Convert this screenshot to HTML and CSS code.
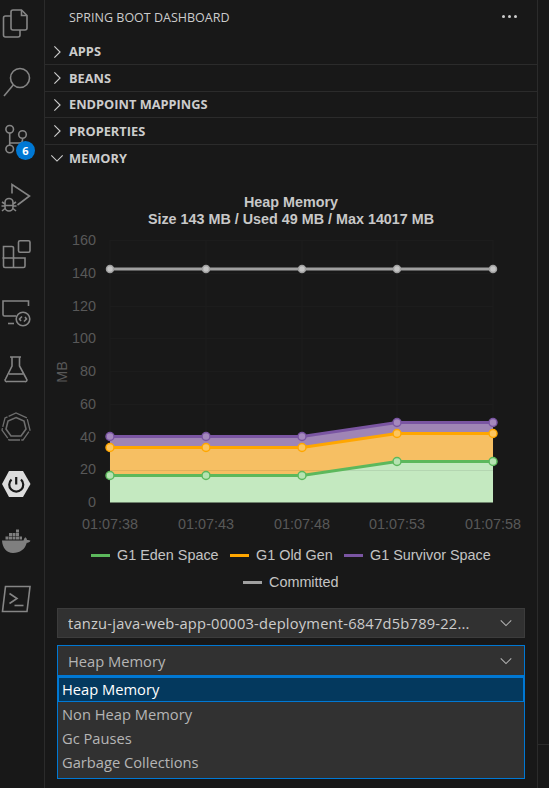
FILE: index.html
```html
<!DOCTYPE html>
<html lang="en">
<head>
    <meta charset="UTF-8">
    <title>Spring Boot Dashboard</title>
    <link rel="stylesheet" href="styles.css">
</head>
<body>
<div class="app">
    <nav class="activity">
        <div class="act-item">
            <svg class="act-icon" viewBox="0 0 30 30"><path d="M12 1H20.500L26 6.500V19a2 2 0 0 1-2 2H12a2 2 0 0 1-2-2V3a2 2 0 0 1 2-2Z"/><path d="M20.500 1V6.500H26"/><path d="M10 7H4.500a2 2 0 0 0-2 2V26a2 2 0 0 0 2 2H17a2 2 0 0 0 2-2V21"/></svg>
        </div>
        <div class="act-item">
            <svg class="act-icon" viewBox="0 0 30 30"><circle cx="19" cy="11" r="9.500"/><path d="M12.200 18L3 29"/></svg>
        </div>
        <div class="act-item">
            <svg class="act-icon" viewBox="0 0 30 30"><circle cx="8.700" cy="5.300" r="3.800"/><circle cx="8.700" cy="25" r="3.800"/><circle cx="21.500" cy="10.500" r="3.800"/><path d="M8.700 9.100V21.200"/><path d="M21.500 14.300V16a3 3 0 0 1-3 3H8.700"/></svg>
            <span class="badge">6</span>
        </div>
        <div class="act-item">
            <svg class="act-icon" viewBox="0 0 30 30"><path d="M11 11.500V2.500L28.500 14L16.500 23"/><path d="M4 20.500a4 4 0 0 1 8 0V25a4 4 0 0 1-8 0Z"/><path d="M4 23.500H12M1 20l3 2M15 20l-3 2M0.500 24H4M15.500 24H12M1 29l3-2.500M15 29l-3-2.500"/></svg>
        </div>
        <div class="act-item">
            <svg class="act-icon" viewBox="0 0 30 30"><rect x="17.500" y="1.800" width="11.500" height="11.500" rx="1.500"/><path d="M2.500 7.500H11a1.500 1.500 0 0 1 1.500 1.500V19H24V27a1.500 1.500 0 0 1-1.500 1.500H4a1.500 1.500 0 0 1-1.500-1.500Z"/><path d="M1.500 19H12.500V28.500"/></svg>
        </div>
        <div class="act-item">
            <svg class="act-icon" viewBox="0 0 30 30"><path d="M15 19H3.500a1.500 1.500 0 0 1-1.500-1.500V4H27.500V9"/><path d="M7 26.500H13"/><circle cx="22" cy="22" r="6.800"/><path d="M21 19.500L18.500 22L20 24M23 24.500L25.500 22L24 20"/></svg>
        </div>
        <div class="act-item">
            <svg class="act-icon" viewBox="0 0 30 30"><path d="M9 3H20M11 3V12L4.500 25a1.500 1.500 0 0 0 1.500 2.500H24a1.500 1.500 0 0 0 1.500-2.500L18.500 12V3"/><path d="M8 20H22"/></svg>
        </div>
        <div class="act-item">
            <svg class="act-icon ring" viewBox="0 0 30 30"><polygon class="ring-thin" points="15,1 26,6 29,18 22,28 8,28 1,18 4,6"/><polygon class="ring-thick" points="15,5.500 23,9 25,17 20,24 10,24 5,17 7,9"/></svg>
        </div>
        <div class="act-item">
            <svg class="act-icon spring" viewBox="0 0 30 30"><polygon class="hex" points="1,15 8,2 22,2 29.500,15 22,28 8,28"/><path class="power" d="M10.500 10.500a7 7 0 1 0 9.500 0"/><path class="power" d="M15.200 8V15.500"/></svg>
        </div>
        <div class="act-item">
            <svg class="act-icon docker" viewBox="0 0 30 30"><path d="M1 13.500H22.500c.4-1.500 1-2.800 2-3.200 1 .8 1.400 1.800 1.500 2.700 1.300-.2 2.500 0 3.500.8-.8 1.500-2.200 2-3.700 2C24 22.500 19 26 12 26 5.500 26 1.500 21 1 13.500Z"/><path d="M4.500 9.500h3v3h-3ZM8 9.500h3v3H8ZM11.500 9.500h3v3h-3ZM15 9.500h3v3h-3ZM8 6h3v3H8ZM11.500 6h3v3h-3ZM15 6h3v3h-3ZM18.500 9.500h2.500v3h-2.500ZM15 2.500h3V5.500h-3Z"/></svg>
        </div>
        <div class="act-item">
            <svg class="act-icon" viewBox="0 0 30 30"><path d="M4.500 2.500H29L26 27.500H1.500Z"/><path d="M8.500 9.500L16 14.500L8.500 19.500"/><path d="M13.500 21.500H22.500"/></svg>
        </div>
    </nav>

    <main class="sidebar">
        <header class="side-title">
            <span>SPRING BOOT DASHBOARD</span>
            <span class="dots"><i></i><i></i><i></i></span>
        </header>
        <div class="section">
            <svg class="chev" viewBox="0 0 16 16"><path d="M5 1.500L11.500 8L5 14.500"/></svg><span class="section-name">APPS</span>
        </div>
        <div class="section">
            <svg class="chev" viewBox="0 0 16 16"><path d="M5 1.500L11.500 8L5 14.500"/></svg><span class="section-name">BEANS</span>
        </div>
        <div class="section">
            <svg class="chev" viewBox="0 0 16 16"><path d="M5 1.500L11.500 8L5 14.500"/></svg><span class="section-name">ENDPOINT MAPPINGS</span>
        </div>
        <div class="section">
            <svg class="chev" viewBox="0 0 16 16"><path d="M5 1.500L11.500 8L5 14.500"/></svg><span class="section-name">PROPERTIES</span>
        </div>
        <div class="section open">
            <svg class="chev" viewBox="0 0 16 16"><path d="M1.500 5L8 11.500L14.500 5"/></svg><span class="section-name">MEMORY</span>
        </div>

        <svg class="chart" viewBox="45 170 492 430">
            <text class="chart-title" x="291" y="207">Heap Memory</text>
            <text class="chart-title" x="291" y="224">Size 143 MB / Used 49 MB / Max 14017 MB</text>

            <g class="grid">
                <path d="M110 240.500H493M110 273.500H493M110 306.500H493M110 338.500H493M110 371.500H493M110 404.500H493M110 437.500H493M110 470.500H493M110 240V502M206 240V502M302 240V502M397 240V502M493 240V502"/>
            </g>

            <g class="y-labels">
                <text x="96" y="245">160</text>
                <text x="96" y="278">140</text>
                <text x="96" y="311">120</text>
                <text x="96" y="343">100</text>
                <text x="96" y="376">80</text>
                <text x="96" y="409">60</text>
                <text x="96" y="442">40</text>
                <text x="96" y="474">20</text>
                <text x="96" y="507">0</text>
            </g>
            <text class="y-name" transform="translate(67 372) rotate(-90)">MB</text>

            <g class="x-labels">
                <text x="110" y="529">01:07:38</text>
                <text x="206" y="529">01:07:43</text>
                <text x="302" y="529">01:07:48</text>
                <text x="397" y="529">01:07:53</text>
                <text x="493" y="529">01:07:58</text>
            </g>

            <polygon class="fill-eden" points="110,475.500 206,475.500 302,475.500 397,461.500 493,461.500 493,502.500 110,502.500"/>
            <polygon class="fill-old" points="110,447.500 206,447.500 302,447.500 397,433.500 493,433.500 493,461.500 397,461.500 302,475.500 206,475.500 110,475.500"/>
            <polygon class="fill-surv" points="110,436.500 206,436.500 302,436.500 397,422.500 493,422.500 493,433.500 397,433.500 302,447.500 206,447.500 110,447.500"/>
            <path class="overlay" d="M110 470.500H493M110 437.500H302"/>

            <polyline class="line-eden" points="110,475.500 206,475.500 302,475.500 397,461.500 493,461.500"/>
            <polyline class="line-old" points="110,447.500 206,447.500 302,447.500 397,433.500 493,433.500"/>
            <polyline class="line-surv" points="110,436.500 206,436.500 302,436.500 397,422.500 493,422.500"/>
            <polyline class="line-comm" points="110,269 206,269 302,269 397,269 493,269"/>

            <g class="dots-eden">
                <circle cx="110" cy="475.500" r="4"/><circle cx="206" cy="475.500" r="4"/><circle cx="302" cy="475.500" r="4"/><circle cx="397" cy="461.500" r="4"/><circle cx="493" cy="461.500" r="4"/>
            </g>
            <g class="dots-old">
                <circle cx="110" cy="447.500" r="4"/><circle cx="206" cy="447.500" r="4"/><circle cx="302" cy="447.500" r="4"/><circle cx="397" cy="433.500" r="4"/><circle cx="493" cy="433.500" r="4"/>
            </g>
            <g class="dots-surv">
                <circle cx="110" cy="436.500" r="4"/><circle cx="206" cy="436.500" r="4"/><circle cx="302" cy="436.500" r="4"/><circle cx="397" cy="422.500" r="4"/><circle cx="493" cy="422.500" r="4"/>
            </g>
            <g class="dots-comm">
                <circle cx="110" cy="269" r="3.500"/><circle cx="206" cy="269" r="3.500"/><circle cx="302" cy="269" r="3.500"/><circle cx="397" cy="269" r="3.500"/><circle cx="493" cy="269" r="3.500"/>
            </g>

            <g class="legend">
                <path class="line-eden" d="M91 555.500H110"/>
                <text x="117" y="560">G1 Eden Space</text>
                <path class="line-old" d="M230 555.500H249"/>
                <text x="256" y="560">G1 Old Gen</text>
                <path class="line-surv" d="M344 555.500H363"/>
                <text x="370" y="560">G1 Survivor Space</text>
                <path class="line-comm" d="M243 582.500H262"/>
                <text x="269" y="587">Committed</text>
            </g>
        </svg>

        <div class="controls">
            <div class="select">
                <span class="select-text wide">tanzu-java-web-app-00003-deployment-6847d5b789-22...</span>
                <svg class="chev-small" viewBox="0 0 16 16"><path d="M2 5L8 11L14 5"/></svg>
            </div>
            <div class="select focused">
                <span class="select-text dim">Heap Memory</span>
                <svg class="chev-small" viewBox="0 0 16 16"><path d="M2 5L8 11L14 5"/></svg>
            </div>
            <ul class="dropdown">
                <li class="selected">Heap Memory</li>
                <li>Non Heap Memory</li>
                <li>Gc Pauses</li>
                <li>Garbage Collections</li>
            </ul>
        </div>
    </main>

    <div class="strip"></div>
</div>
</body>
</html>
```

FILE: styles.css
```css
* {
    box-sizing: border-box;
}
html, body {
    margin: 0;
    height: 100%;
    background-color: #181818;
    overflow: hidden;
}
body {
    font-family: "Open Sans", "Noto Sans", sans-serif;
    color: #cccccc;
}
.app {
    display: flex;
    height: 788px;
}

/* activity bar */
.activity {
    flex: 0 0 45px;
    display: flex;
    flex-direction: column;
    gap: 27.5px;
    padding: 9px 0 0 1px;
    border-right: 1px solid #2b2b2b;
}
.act-item {
    position: relative;
    width: 30px;
    height: 30px;
}
.act-icon {
    display: block;
    width: 30px;
    height: 30px;
    fill: none;
    stroke: #858585;
    stroke-width: 1.6;
}
.ring {
    stroke: #6e6e6e;
}
.ring-thin {
    stroke-width: 1.3;
    stroke-dasharray: 12 1.2;
}
.ring-thick {
    stroke-width: 1.6;
}
.spring .hex {
    fill: #dcdcdc;
    stroke: none;
}
.spring .power {
    stroke: #181818;
    stroke-width: 2.2;
}
.docker {
    fill: #7f7f7f;
    stroke: none;
}
.badge {
    position: absolute;
    left: 15px;
    top: 16.5px;
    width: 19px;
    height: 19px;
    border-radius: 50%;
    background-color: #0078d4;
    color: #ffffff;
    font-size: 11px;
    font-weight: 700;
    line-height: 19px;
    text-align: center;
}

/* sidebar */
.sidebar {
    flex: 0 0 493px;
    display: flex;
    flex-direction: column;
    border-right: 1px solid #2b2b2b;
}
.side-title {
    display: flex;
    align-items: center;
    justify-content: space-between;
    height: 34px;
    padding: 0 20px 0 24px;
    font-size: 12.5px;
    margin-bottom: 4.75px;
}
.dots {
    display: flex;
    gap: 3px;
    margin-top: -2px;
}
.dots i {
    display: block;
    width: 3px;
    height: 3px;
    border-radius: 50%;
    background-color: #cccccc;
}
.section {
    display: flex;
    align-items: center;
    height: 26.5px;
    padding-left: 5px;
    border-bottom: 1px solid #2b2b2b;
    font-size: 12.8px;
    font-weight: 700;
}
.section.open {
    border-bottom: none;
}
.section-name {
    margin-top: -1px;
}
.chev {
    flex: none;
    width: 14px;
    height: 14px;
    margin-right: 5px;
    fill: none;
    stroke: #cccccc;
    stroke-width: 1.3;
}
.chart {
    display: block;
    flex: none;
    width: 492px;
    height: 430px;
    margin-top: -1.25px;
}
.chart text {
    font-family: "Liberation Sans", Arial, sans-serif;
}
.chart-title {
    font-size: 14.35px;
    font-weight: 700;
    fill: #c8c8c8;
    text-anchor: middle;
}
.grid path {
    fill: none;
    stroke: #1c1c1c;
    stroke-width: 1;
}
.y-labels text {
    font-size: 14.4px;
    fill: #585858;
    text-anchor: end;
}
.x-labels text {
    font-size: 14.4px;
    fill: #585858;
    text-anchor: middle;
}
.y-name {
    font-size: 14.4px;
    fill: #585858;
    text-anchor: middle;
}
.fill-eden {
    fill: #c4e9c0;
}
.fill-old {
    fill: #f6bf63;
}
.fill-surv {
    fill: #9f85b5;
}
.overlay {
    fill: none;
    stroke: #000000;
    stroke-opacity: 0.08;
}
.line-eden, .line-old, .line-surv, .line-comm {
    fill: none;
    stroke-width: 3;
}
.line-eden {
    stroke: #5cb85c;
}
.line-old {
    stroke: #ffa600;
}
.line-surv {
    stroke: #7a55a2;
}
.line-comm {
    stroke: #a0a0a0;
}
.dots-eden circle {
    fill: #b5e3b1;
    stroke: #5cb85c;
    stroke-width: 1.5;
}
.dots-old circle {
    fill: #fcc55f;
    stroke: #ffa600;
    stroke-width: 1.5;
}
.dots-surv circle {
    fill: #a488bd;
    stroke: #7a55a2;
    stroke-width: 1.5;
}
.dots-comm circle {
    fill: #c4c4c4;
    stroke: #a0a0a0;
    stroke-width: 1.5;
}
.legend text {
    font-size: 14.4px;
    fill: #c4c4c4;
}

/* selects */
.controls {
    display: flex;
    flex-direction: column;
    gap: 7px;
    padding: 8px 12px 0 12px;
}
.select {
    display: flex;
    align-items: center;
    justify-content: space-between;
    height: 30px;
    padding: 0 11px 0 10px;
    background-color: #313131;
    border: 1px solid #3c3c3c;
    font-size: 14.7px;
}
.select.focused {
    border-color: #0078d4;
    border-bottom: none;
}
.select-text {
    width: 420px;
    white-space: nowrap;
    overflow: hidden;
}
.select-text.wide {
    letter-spacing: 0.2px;
}
.select-text.dim {
    color: #b5b5b5;
}
.chev-small {
    flex: none;
    width: 14px;
    height: 14px;
    fill: none;
    stroke: #b5b5b5;
    stroke-width: 1.2;
}
.dropdown {
    list-style: none;
    margin: -7px 0 0;
    padding: 0 0 4px;
    background-color: #313131;
    border: 1px solid #0078d4;
    border-top-width: 2px;
    font-size: 14.7px;
    color: #b5b5b5;
}
.dropdown li {
    height: 24px;
    line-height: 24px;
    padding-left: 4px;
}
.dropdown li.selected {
    height: 25px;
    background-color: #04395e;
    border: 1px solid #0078d4;
    padding-left: 3px;
    line-height: 23px;
    color: #ffffff;
}

/* right edge */
.strip {
    flex: 1;
    height: 745px;
    border-bottom: 1px solid #2b2b2b;
}
```
